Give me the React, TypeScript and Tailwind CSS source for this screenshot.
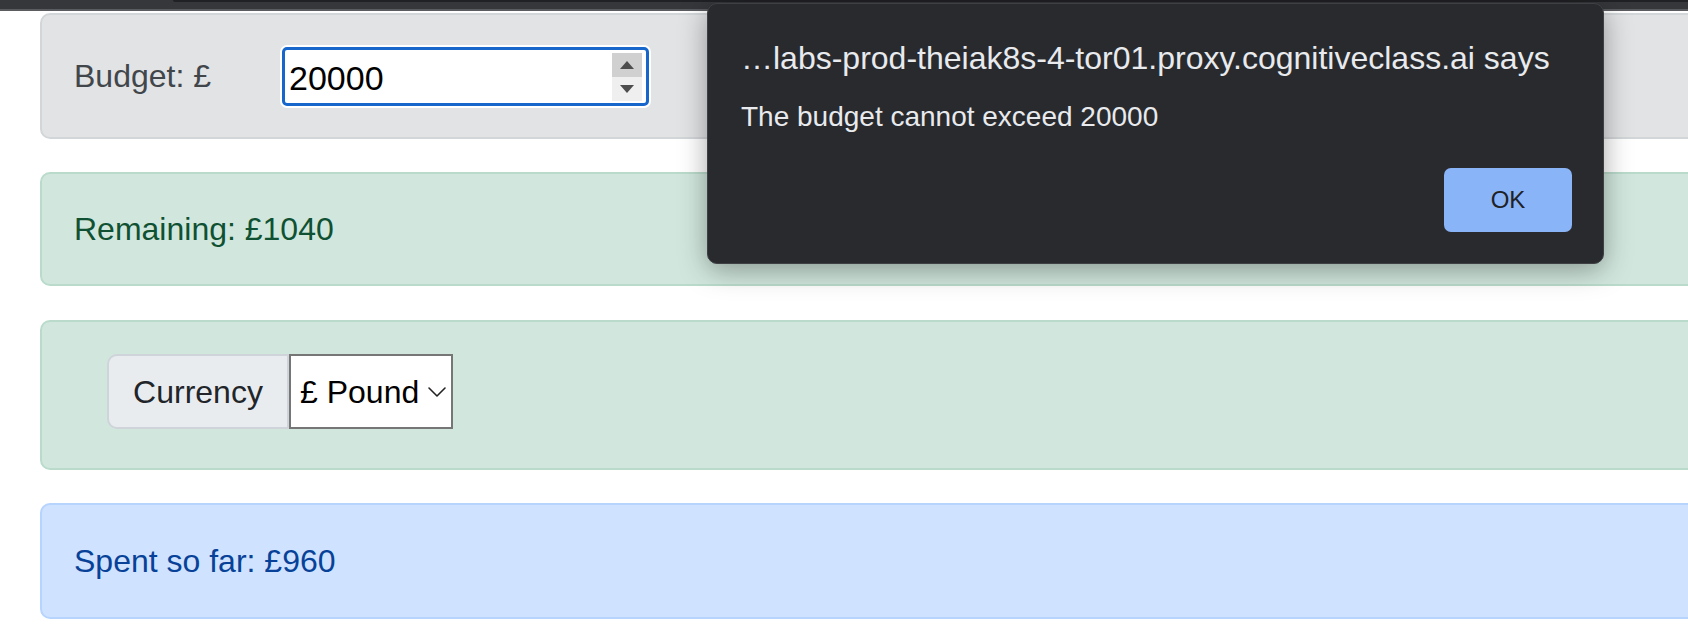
import { ChevronDown } from "lucide-react";

const FONT = "font-['Liberation_Sans',Arial,sans-serif]";

function Spinner() {
  return (
    <div className="flex h-[48px] w-[30px] shrink-0 flex-col">
      <div className="flex h-[24px] items-center justify-center bg-[#d0d0d0]">
        <svg width="14" height="8" viewBox="0 0 14 8" aria-hidden>
          <path d="M7 0 L14 8 L0 8 Z" fill="#4d4d4d" />
        </svg>
      </div>
      <div className="flex h-[24px] items-center justify-center bg-[#efefef]">
        <svg width="14" height="8" viewBox="0 0 14 8" aria-hidden>
          <path d="M0 0 L14 0 L7 8 Z" fill="#4d4d4d" />
        </svg>
      </div>
    </div>
  );
}

function BudgetCard() {
  return (
    <div className="flex h-[126px] w-[1660px] shrink-0 items-center rounded-[10px] border-2 border-[#d3d6d8] bg-[#e2e3e5] pl-[32px]">
      <span className="w-[206px] shrink-0 text-[32px] leading-none text-[#41464b]">
        Budget: £
      </span>
      <div className="rounded-[7px] bg-white p-[2px]">
        <div className="flex h-[59px] w-[367px] items-start justify-between rounded-[5px] border-[3px] border-[#1766cc] bg-white pt-[3px] pr-[4px] pl-[4px]">
          <span className="self-center text-[34px] leading-none text-black">20000</span>
          <Spinner />
        </div>
      </div>
    </div>
  );
}

function TextCard({
  text,
  h,
  tone,
}: {
  text: string;
  h: string;
  tone: "green" | "blue";
}) {
  const cls =
    tone === "green"
      ? "border-[#badbcc] bg-[#d1e7dd] text-[#0f5132]"
      : "border-[#b6d4fe] bg-[#cfe2ff] text-[#084298]";
  return (
    <div
      className={`flex w-[1660px] shrink-0 items-center rounded-[10px] border-2 pl-[32px] ${h} ${cls}`}
    >
      <span className="text-[32px] leading-none">{text}</span>
    </div>
  );
}

function CurrencyCard() {
  return (
    <div className="flex h-[150px] w-[1660px] shrink-0 items-start rounded-[10px] border-2 border-[#badbcc] bg-[#d1e7dd] pt-[32px] pl-[65px]">
      <div className="flex h-[75px] w-[182px] items-center justify-center rounded-l-[10px] border-2 border-[#ced4da] bg-[#e9ecef] text-[32px] leading-none text-[#212529]">
        Currency
      </div>
      <div className="flex h-[75px] w-[164px] items-center overflow-hidden border-2 border-[#767676] bg-white pl-[9px] text-[32px] leading-none text-black">
        <span className="shrink-0">£ Pound</span>
        <ChevronDown size={32} strokeWidth={1.2} className="ml-[2px] shrink-0 text-[#222]" />
      </div>
    </div>
  );
}

function AlertDialog() {
  return (
    <div className="absolute top-[3px] left-[707px] flex h-[261px] w-[897px] flex-col rounded-[10px] border border-[#3f4044] bg-[#292a2d] pt-[36px] pr-[31px] pb-[31px] pl-[33px] text-[#e8eaed] shadow-[0_6px_28px_rgba(0,0,0,0.35)]">
      <div className="text-[32px] leading-[37px] whitespace-nowrap">
        …labs-prod-theiak8s-4-tor01.proxy.cognitiveclass.ai says
      </div>
      <div className="mt-[25px] text-[28px] leading-[30px]">The budget cannot exceed 20000</div>
      <div className="mt-auto flex justify-end">
        <button className="h-[64px] w-[128px] rounded-[7px] bg-[#8ab4f8] text-[24px] font-medium text-[#202124]">
          OK
        </button>
      </div>
    </div>
  );
}

export default function App() {
  return (
    <div className={`relative h-[628px] w-[1688px] overflow-hidden bg-white ${FONT}`}>
      <div className="relative h-[9px] bg-[#36373b]">
        <div className="absolute top-0 left-[173px] h-[2px] w-[1515px] rounded-bl-[6px] bg-[#202124]" />
      </div>
      <div className="h-[2px] bg-[#5b5c60]" />
      <div className="flex flex-col pt-[2px] pl-[40px]">
        <BudgetCard />
        <div className="h-[33px]" />
        <TextCard text="Remaining: £1040" h="h-[114px]" tone="green" />
        <div className="h-[34px]" />
        <CurrencyCard />
        <div className="h-[33px]" />
        <TextCard text="Spent so far: £960" h="h-[116px]" tone="blue" />
      </div>
      <AlertDialog />
    </div>
  );
}
